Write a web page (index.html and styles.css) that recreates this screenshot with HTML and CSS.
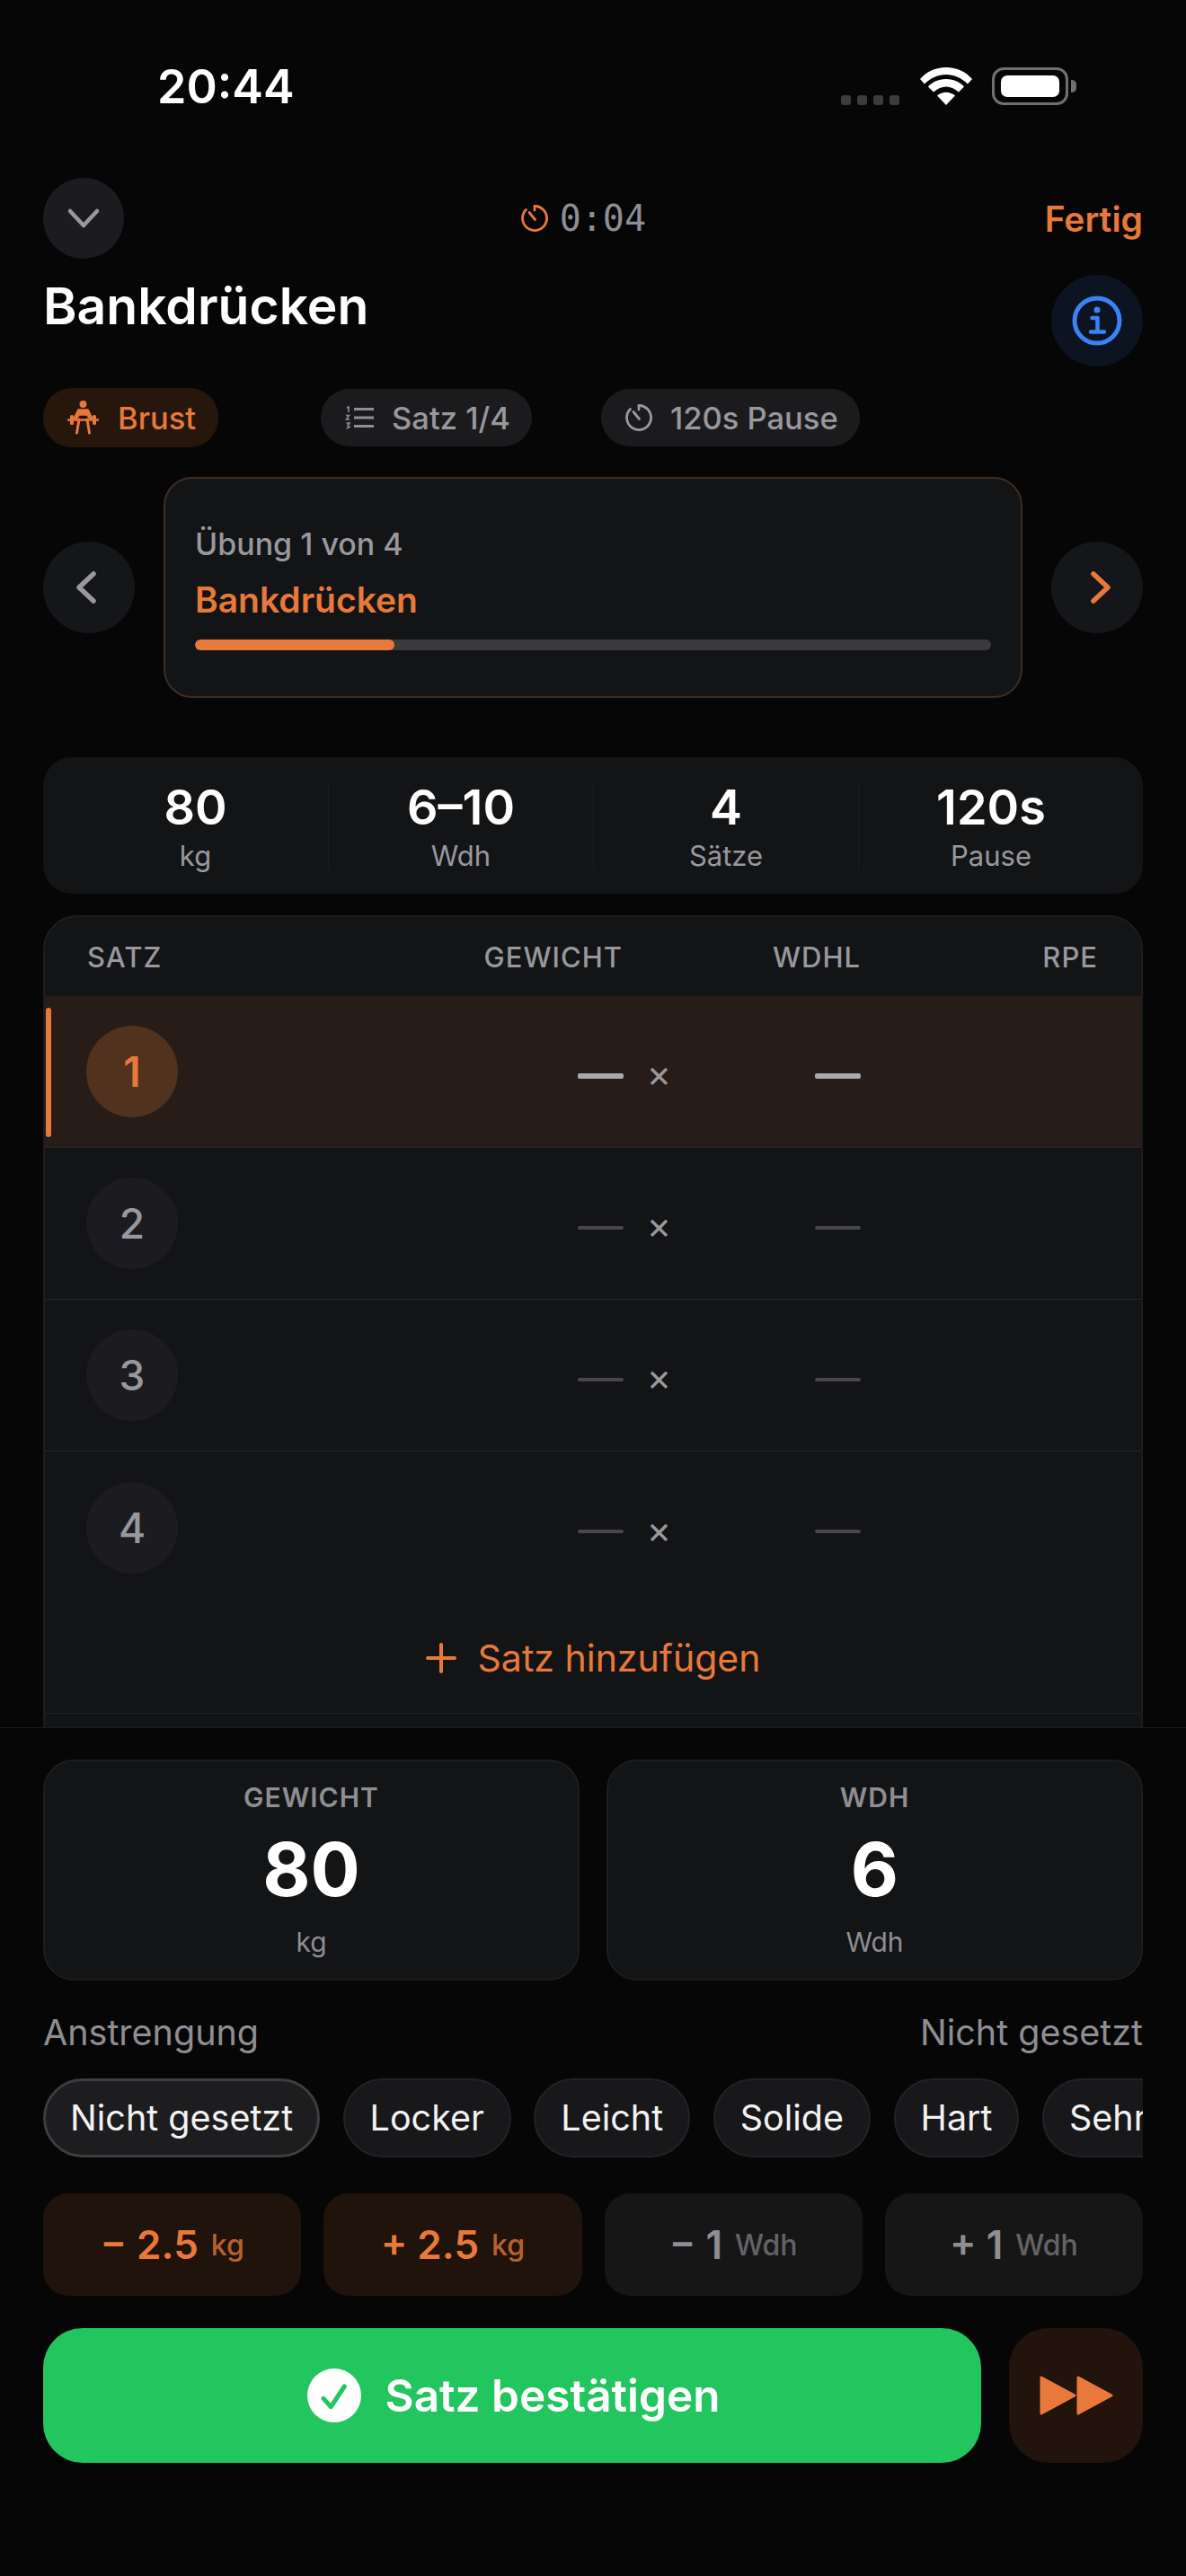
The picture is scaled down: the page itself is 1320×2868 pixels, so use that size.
FILE: index.html
```html
<!DOCTYPE html>
<html lang="de">
<head>
    <meta charset="UTF-8">
    <meta name="viewport" content="width=device-width, initial-scale=1.0">
    <title>Bankdrücken</title>
    <link rel="stylesheet" href="styles.css">
</head>
<body>
    <div class="phone">
        <div class="status-bar">
            <span class="clock">20:44</span>
            <div class="status-icons">
                <div class="signal"><i></i><i></i><i></i><i></i></div>
                <svg class="wifi" viewBox="0 0 58 42"><path d="M29 42 19 31.500C25 26.500 33 26.500 39 31.500Z M29 13C38 13 45 17 49 21.500L43 27.500C34 19.500 24 19.500 15 27.500L9 21.500C13 17 20 13 29 13Z M29 0C41 0 51 5 58 13L53 18.500C39 4.500 19 4.500 5 18.500L0 13C7 5 17 0 29 0Z" fill="#fff"/></svg>
                <div class="battery"><div class="battery-fill"></div></div>
                <div class="battery-nub"></div>
            </div>
        </div>

        <div class="scroll">
            <div class="top-row">
                <button class="round-btn small">
                    <svg width="40" height="26" viewBox="0 0 40 26" fill="none" stroke="#98989e" stroke-width="4.500" stroke-linecap="round" stroke-linejoin="round"><path d="M5 5 20 21 35 5"/></svg>
                </button>
                <div class="timer">
                    <svg width="30" height="32" viewBox="0 0 30 32" fill="none" stroke="#e8793a" stroke-width="2.800" stroke-linecap="round"><path d="M15 2.500A13.500 13.500 0 1 1 5.500 6.500"/><path d="M15 3V7"/><path d="M15.500 17.500 9 9.500"/></svg>
                    <span>0:04</span>
                </div>
                <span class="done">Fertig</span>
            </div>

            <div class="title-row">
                <h1>Bankdrücken</h1>
                <button class="round-btn info">
                    <svg width="56" height="56" viewBox="0 0 56 56" fill="none" stroke="#3b82f6"><circle cx="28" cy="28" r="25" stroke-width="5"/><circle cx="28" cy="16" r="3.500" fill="#3b82f6" stroke="none"/><path d="M22.500 25H28.500V40M21 40.500H36" stroke-width="4.500" stroke-linecap="round" stroke-linejoin="round"/></svg>
                </button>
            </div>

            <div class="chips">
                <div class="chip chip-orange">
                    <svg width="36" height="38" viewBox="0 0 36 38" fill="#e8793a" stroke="#e8793a" stroke-linecap="round" stroke-linejoin="round"><circle cx="17.500" cy="4" r="4" stroke="none"/><path d="M12 10H23L28 20H24.500L22 16H13L10.500 20H7Z" stroke-width="1.500"/><path d="M1 21.500H34" stroke-width="2.400"/><rect x="3" y="16" width="4" height="11" rx="1.500" stroke="none"/><rect x="28" y="16" width="4" height="11" rx="1.500" stroke="none"/><path d="M13 21 10.500 36M22 21 24.500 36" fill="none" stroke-width="3"/></svg>
                    <span>Brust</span>
                </div>
                <div class="chip">
                    <svg width="32" height="26" viewBox="0 0 32 26" fill="none" stroke="#8e8e93" stroke-width="3"><path d="M10 3.500H32M10 13H32M10 22.500H32"/><path d="M2 2 4 1V7M1 10.500H4.500L1.500 15H5M1.500 19H5L3 21.500 5 23.500 1.500 25" stroke-width="1.600"/></svg>
                    <span>Satz 1/4</span>
                </div>
                <div class="chip">
                    <svg width="30" height="32" viewBox="0 0 30 32" fill="none" stroke="#98989e" stroke-width="2.800" stroke-linecap="round"><path d="M15 2.500A13.500 13.500 0 1 1 5.500 6.500"/><path d="M15 3V7"/><path d="M15.500 17.500 9 9.500"/></svg>
                    <span>120s Pause</span>
                </div>
            </div>

            <div class="exercise-row">
                <button class="round-btn">
                    <svg class="chev-left" width="24" height="36" viewBox="0 0 24 36" fill="none" stroke="#98989e" stroke-width="5.500" stroke-linecap="round" stroke-linejoin="round"><path d="M20 3 4 18 20 33"/></svg>
                </button>
                <div class="exercise-card">
                    <div class="exercise-count">Übung 1 von 4</div>
                    <div class="exercise-name">Bankdrücken</div>
                    <div class="progress"><div class="progress-fill" style="width: 25%"></div></div>
                </div>
                <button class="round-btn">
                    <svg class="chev-right" width="24" height="36" viewBox="0 0 24 36" fill="none" stroke="#e8793a" stroke-width="5.500" stroke-linecap="round" stroke-linejoin="round"><path d="M4 3 20 18 4 33"/></svg>
                </button>
            </div>

            <div class="stats">
                <div class="stat"><b>80</b><span>kg</span></div>
                <div class="stat"><b>6–10</b><span>Wdh</span></div>
                <div class="stat"><b>4</b><span>Sätze</span></div>
                <div class="stat"><b>120s</b><span>Pause</span></div>
            </div>

            <div class="sets">
                <div class="sets-head">
                    <span>SATZ</span>
                    <span>GEWICHT</span>
                    <span>WDHL</span>
                    <span>RPE</span>
                </div>
                <div class="set-row active">
                    <div class="set-num">1</div>
                    <i class="dash"></i><span class="times">×</span><i class="dash"></i>
                </div>
                <div class="set-row">
                    <div class="set-num">2</div>
                    <i class="dash"></i><span class="times">×</span><i class="dash"></i>
                </div>
                <div class="set-row">
                    <div class="set-num">3</div>
                    <i class="dash"></i><span class="times">×</span><i class="dash"></i>
                </div>
                <div class="set-row last">
                    <div class="set-num">4</div>
                    <i class="dash"></i><span class="times">×</span><i class="dash"></i>
                </div>
                <div class="add-set">
                    <svg width="34" height="34" viewBox="0 0 34 34" fill="none" stroke="#e8793a" stroke-width="4" stroke-linecap="round"><path d="M17 2V32M2 17H32"/></svg>
                    <span>Satz hinzufügen</span>
                </div>
            </div>
        </div>

        <div class="panel">
            <div class="inputs">
                <div class="input-card">
                    <div class="input-label">GEWICHT</div>
                    <div class="input-value">80</div>
                    <div class="input-unit">kg</div>
                </div>
                <div class="input-card">
                    <div class="input-label">WDH</div>
                    <div class="input-value">6</div>
                    <div class="input-unit">Wdh</div>
                </div>
            </div>

            <div class="effort-head">
                <span>Anstrengung</span>
                <span>Nicht gesetzt</span>
            </div>
            <div class="effort">
                <div class="pill selected">Nicht gesetzt</div>
                <div class="pill">Locker</div>
                <div class="pill">Leicht</div>
                <div class="pill">Solide</div>
                <div class="pill">Hart</div>
                <div class="pill">Sehr hart</div>
            </div>

            <div class="steps">
                <div class="step orange"><span class="step-main">− 2.5</span><span class="step-unit">kg</span></div>
                <div class="step orange"><span class="step-main">+ 2.5</span><span class="step-unit">kg</span></div>
                <div class="step"><span class="step-main">− 1</span><span class="step-unit">Wdh</span></div>
                <div class="step"><span class="step-main">+ 1</span><span class="step-unit">Wdh</span></div>
            </div>

            <div class="actions">
                <button class="confirm">
                    <svg width="60" height="60" viewBox="0 0 60 60"><circle cx="30" cy="30" r="30" fill="#fff"/><path d="M18 33.300 26.300 42.600 41.300 20" fill="none" stroke="#22c55e" stroke-width="5" stroke-linecap="round" stroke-linejoin="round"/></svg>
                    <span>Satz bestätigen</span>
                </button>
                <button class="skip">
                    <svg width="84" height="46" viewBox="0 0 84 46" fill="#e8793a" stroke="#e8793a" stroke-width="3" stroke-linejoin="round"><path d="M3 3 40 23 3 43Z"/><path d="M44 3 81 23 44 43Z"/></svg>
                </button>
            </div>
        </div>
    </div>
</body>
</html>
```

FILE: styles.css
```css
* {
    box-sizing: border-box;
}
body {
    margin: 0;
    background-color: #060607;
    font-family: Inter, "Noto Sans", sans-serif;
    color: #fff;
}
button {
    border: none;
    padding: 0;
    font-family: inherit;
    cursor: pointer;
}
.phone {
    width: 1320px;
    height: 2868px;
    display: flex;
    flex-direction: column;
    overflow: hidden;
}
.status-bar {
    height: 198px;
    flex: none;
    display: flex;
    justify-content: space-between;
    padding: 70px 122px 0 175px;
}
.clock {
    font-size: 52px;
    font-weight: 600;
    line-height: 54px;
}
.status-icons {
    display: flex;
    align-items: flex-end;
    height: 42px;
    margin-top: 5px;
}
.signal {
    display: flex;
    gap: 7px;
    margin-right: 23px;
}
.signal i {
    width: 11px;
    height: 11px;
    border-radius: 3px;
    background: #3c3c3e;
}
.wifi {
    width: 58px;
    height: 42px;
    margin-right: 22px;
}
.battery {
    width: 85px;
    height: 42px;
    padding: 6px 7px;
    border: 3px solid #707072;
    border-radius: 13px;
}
.battery-fill {
    height: 100%;
    background: #fff;
    border-radius: 7px;
}
.battery-nub {
    width: 6px;
    height: 14px;
    margin: 0 0 14px 3px;
    background: #707072;
    border-radius: 0 5px 5px 0;
}
.scroll {
    height: 1725px;
    flex: none;
    padding: 0 48px;
    overflow: hidden;
}
.top-row {
    display: flex;
    justify-content: space-between;
    align-items: center;
    height: 90px;
}
.round-btn {
    width: 102px;
    height: 102px;
    flex: none;
    border-radius: 50%;
    background: #151619;
    display: flex;
    align-items: center;
    justify-content: center;
}
.round-btn.small {
    width: 90px;
    height: 90px;
    background: #1c1c20;
}
.round-btn.info {
    background: #0b1420;
}
.chev-left {
    margin-right: 7px;
}
.chev-right {
    margin-left: 7px;
}
.timer {
    display: flex;
    align-items: center;
    gap: 13px;
    margin-right: 2px;
    font-family: "DejaVu Sans Mono", monospace;
    font-size: 40px;
    color: #8e8e93;
}
.done {
    font-size: 39px;
    font-weight: 600;
    color: #e8793a;
}
.title-row {
    display: flex;
    justify-content: space-between;
    margin-top: 18px;
}
h1 {
    margin: 0;
    font-size: 57px;
    font-weight: 600;
    line-height: 70px;
}
.chips {
    display: flex;
    align-items: center;
    gap: 77px;
    margin-top: 24px;
    height: 66px;
}
.chip {
    height: 64px;
    padding: 0 24px 0 27px;
    display: flex;
    align-items: center;
    gap: 20px;
    border-radius: 32px;
    background: #1b1b1d;
    color: #98989e;
    font-size: 34.500px;
    font-weight: 500;
}
.chip-orange {
    height: 66px;
    padding-right: 25px;
    margin-right: 37px;
    background: #26160c;
    color: #e8793a;
}
.exercise-row {
    display: flex;
    align-items: center;
    justify-content: space-between;
    margin-top: 33px;
}
.exercise-card {
    width: 956px;
    height: 246px;
    padding: 53px 33px 0 33px;
    background: #131416;
    border: 2px solid #3f2d20;
    border-radius: 32px;
}
.exercise-count {
    font-size: 34px;
    font-weight: 500;
    line-height: 40px;
    color: #98989e;
}
.exercise-name {
    margin-top: 17px;
    font-size: 39px;
    font-weight: 600;
    line-height: 50px;
    color: #e8793a;
}
.progress {
    height: 12px;
    margin-top: 19px;
    background: #3a3a3d;
    border-radius: 6px;
    overflow: hidden;
}
.progress-fill {
    height: 100%;
    background: #e8793a;
    border-radius: 6px;
}
.stats {
    height: 152px;
    margin-top: 66px;
    display: grid;
    grid-template-columns: repeat(4, 1fr);
    align-items: center;
    background: #131416;
    border-radius: 32px;
    padding: 0 22px;
}
.stat {
    display: flex;
    flex-direction: column;
    align-items: center;
    border-left: 1px solid #1b1c1e;
    height: 97px;
    justify-content: flex-start;
}
.stat:first-child {
    border-left: none;
}
.stat b {
    font-size: 54px;
    font-weight: 600;
    line-height: 56px;
}
.stat span {
    margin-top: 7px;
    font-size: 31px;
    line-height: 38px;
    color: #98989e;
}
.sets {
    margin-top: 24px;
    background: #131416;
    border: 2px solid #1c1d1f;
    border-radius: 38px 38px 0 0;
    height: 960px;
}
.sets-head {
    height: 88px;
    display: grid;
    grid-template-columns: 300px 296px 265px 264px;
    padding-left: 47px;
    align-items: center;
    font-size: 31px;
    font-weight: 500;
    letter-spacing: 1px;
    color: #98989e;
}
.sets-head span:not(:first-child) {
    text-align: right;
}
.set-row {
    height: 169px;
    display: flex;
    align-items: center;
    padding-left: 46px;
    border-bottom: 1px solid #25262a;
    position: relative;
}
.set-row.last {
    border-bottom: none;
}
.set-num {
    width: 102px;
    height: 102px;
    flex: none;
    margin-right: 445px;
    border-radius: 50%;
    background: #1c1c20;
    display: flex;
    align-items: center;
    justify-content: center;
    font-size: 46px;
    font-weight: 500;
    color: #98989e;
}
.dash {
    width: 51px;
    height: 4px;
    margin-top: 9px;
    border-radius: 2px;
    background: #48484b;
}
.times {
    width: 79px;
    margin-right: 134px;
    text-align: center;
    font-size: 42px;
    line-height: 42px;
    margin-top: 4px;
    color: #98989e;
}
.set-row.active {
    background: #271c17;
}
.set-row.active::before {
    content: "";
    position: absolute;
    left: 1px;
    top: 13px;
    width: 6px;
    height: 144px;
    border-radius: 3px;
    background: #e8793a;
}
.active .set-num {
    background: #50321f;
    color: #e8793a;
    font-weight: 600;
}
.active .dash {
    height: 6px;
    background: #a8a8ad;
}
.add-set {
    height: 123px;
    display: flex;
    align-items: center;
    justify-content: center;
    gap: 24px;
    border-bottom: 1px solid #1f2023;
    font-size: 41px;
    color: #e8793a;
}
.panel {
    flex: 1;
    padding: 35px 48px 0 48px;
    background: #060607;
    border-top: 1px solid #1a1b1d;
    position: relative;
}
.inputs {
    display: grid;
    grid-template-columns: 1fr 1fr;
    gap: 30px;
}
.input-card {
    height: 246px;
    padding-top: 23px;
    background: #131416;
    border: 2px solid #1c1d1f;
    border-radius: 34px;
    text-align: center;
}
.input-label {
    font-size: 30px;
    font-weight: 600;
    line-height: 34px;
    letter-spacing: 1px;
    color: #8e8e93;
}
.input-value {
    margin-top: 16px;
    font-size: 82px;
    font-weight: 700;
    line-height: 96px;
}
.input-unit {
    margin-top: 13px;
    font-size: 30px;
    line-height: 38px;
    color: #8e8e93;
}
.effort-head {
    display: flex;
    justify-content: space-between;
    margin-top: 35px;
    font-size: 39.500px;
    line-height: 46px;
    color: #8e8e93;
}
.effort {
    display: flex;
    gap: 25.500px;
    margin-top: 28px;
    overflow: hidden;
}
.pill {
    height: 88px;
    flex: none;
    padding: 0 28px;
    display: flex;
    align-items: center;
    background: #18181b;
    border: 2px solid #222326;
    border-radius: 44px;
    font-size: 39.500px;
    white-space: nowrap;
    color: #f2f2f2;
}
.pill.selected {
    padding: 0 27px;
    background: #1d1d1f;
    border: 3px solid #3d3d3f;
}
.steps {
    display: grid;
    grid-template-columns: repeat(4, 1fr);
    gap: 25px;
    margin-top: 40px;
}
.step {
    height: 114px;
    display: flex;
    align-items: center;
    justify-content: center;
    gap: 14px;
    background: #161617;
    border-radius: 28px;
    color: #8e8e93;
}
.step-main {
    font-size: 44px;
    font-weight: 600;
}
.step-unit {
    font-size: 32px;
    font-weight: 500;
    color: #636366;
}
.step.orange {
    background: #20130b;
    color: #e8793a;
}
.step.orange .step-unit {
    color: #b8612f;
}
.actions {
    display: flex;
    justify-content: space-between;
    margin-top: 36px;
}
.confirm {
    width: 1044px;
    height: 150px;
    padding-left: 4px;
    display: flex;
    align-items: center;
    justify-content: center;
    gap: 26px;
    background: #22c55e;
    border-radius: 44px;
    color: #fff;
    font-size: 49.500px;
    font-weight: 600;
}
.skip {
    width: 149px;
    height: 150px;
    display: flex;
    align-items: center;
    justify-content: center;
    background: #22140c;
    border-radius: 44px;
}
```
